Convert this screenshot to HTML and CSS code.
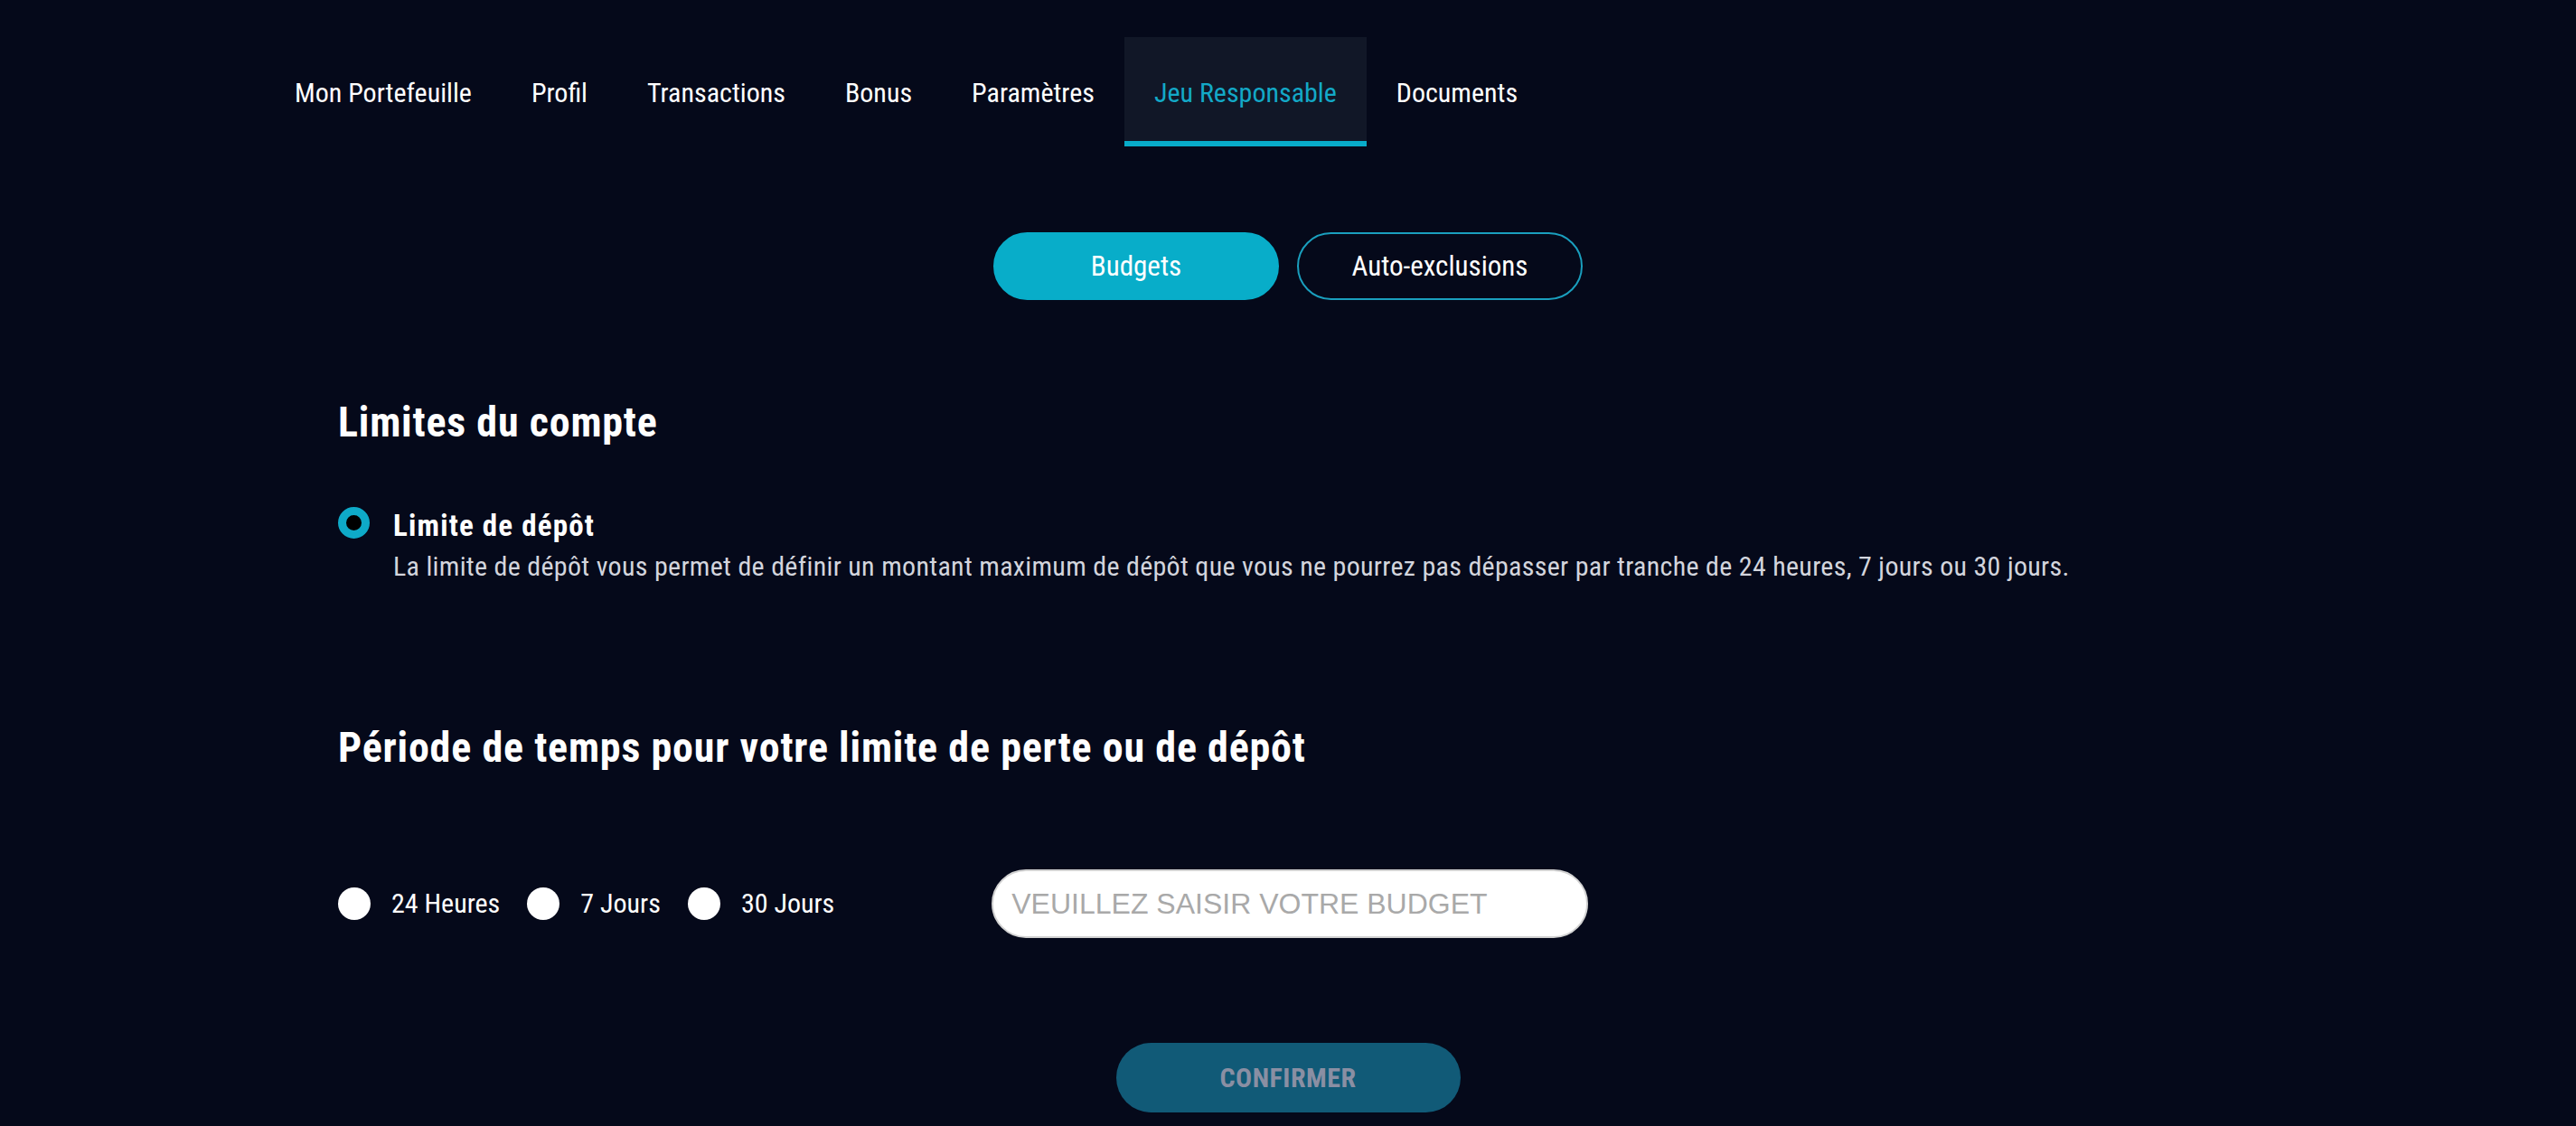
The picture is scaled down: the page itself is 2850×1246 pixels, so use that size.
FILE: index.html
```html
<!DOCTYPE html>
<html lang="fr">
<head>
<meta charset="utf-8">
<title>Jeu Responsable</title>
<link rel="stylesheet" href="styles.css">
</head>
<body>
<div class="page">
  <nav class="tabs">
    <a class="tab">Mon Portefeuille</a>
    <a class="tab">Profil</a>
    <a class="tab">Transactions</a>
    <a class="tab">Bonus</a>
    <a class="tab">Paramètres</a>
    <a class="tab tab-active">Jeu Responsable</a>
    <a class="tab">Documents</a>
  </nav>

  <div class="pills">
    <button class="pill pill-active">Budgets</button>
    <button class="pill">Auto-exclusions</button>
  </div>

  <section class="content">
    <h2 class="heading">Limites du compte</h2>
    <div class="option">
      <span class="ring"></span>
      <div class="option-text">
        <div class="option-title">Limite de dépôt</div>
        <div class="option-desc">La limite de dépôt vous permet de définir un montant maximum de dépôt que vous ne pourrez pas dépasser par tranche de 24 heures, 7 jours ou 30 jours.</div>
      </div>
    </div>

    <h2 class="heading heading-2">Période de temps pour votre limite de perte ou de dépôt</h2>

    <div class="period-row">
      <div class="periods">
        <label class="period"><span class="dot"></span><span class="period-label">24 Heures</span></label>
        <label class="period"><span class="dot"></span><span class="period-label">7 Jours</span></label>
        <label class="period"><span class="dot"></span><span class="period-label">30 Jours</span></label>
      </div>
      <input class="budget" type="text" placeholder="VEUILLEZ SAISIR VOTRE BUDGET">
    </div>

    <div class="actions">
      <button class="confirm">CONFIRMER</button>
    </div>
  </section>
</div>
</body>
</html>
```
FILE: styles.css
```css
html, body {
  margin: 0;
  padding: 0;
  background: #05091a;
  height: 100%;
  overflow: hidden;
}

body {
  font-family: "Roboto Condensed", "Liberation Sans Narrow", "Liberation Sans", sans-serif;
  color: #ffffff;
}

.page {
  width: 2262px;
  margin: 0 auto;
}

/* top tabs */
.tabs {
  display: flex;
  margin-top: 41px;
  height: 121px;
}

.tab {
  display: block;
  padding: 0 33px;
  font-size: 30px;
  line-height: 123px;
  height: 121px;
  color: #ffffff;
  white-space: nowrap;
}

.tab:first-child {
  margin-left: -1px;
}

.tab-active {
  background: #111727;
  color: #13a9c7;
  box-shadow: inset 0 -6px 0 #08abc9;
}

/* pill switch */
.pills {
  display: flex;
  justify-content: center;
  gap: 20px;
  margin-top: 95px;
}

.pill {
  width: 316px;
  height: 75px;
  border-radius: 38px;
  border: 2px solid #1a9fbe;
  background: transparent;
  color: #ffffff;
  font-family: inherit;
  font-size: 31px;
  padding: 0;
}

.pill-active {
  background: #08adc9;
  border-color: #08adc9;
}

/* content */
.content {
  padding: 0 80px;
}

.heading {
  margin: 108px 0 0;
  font-size: 46px;
  line-height: 55px;
  font-weight: 700;
  letter-spacing: 0.8px;
}

.heading-2 {
  margin-top: 151px;
}

.option {
  display: flex;
  align-items: flex-start;
  gap: 26px;
  margin-top: 64px;
}

.ring {
  flex: none;
  box-sizing: border-box;
  width: 35px;
  height: 35px;
  margin-top: 2px;
  border-radius: 50%;
  border: 9px solid #0eaac8;
  background: #000000;
}

.option-title {
  font-size: 33px;
  font-weight: 700;
  line-height: 45px;
  letter-spacing: 1.2px;
}

.option-desc {
  font-size: 30px;
  line-height: 45px;
  letter-spacing: 0.3px;
  color: #d3d5dd;
}

.period-row {
  display: flex;
  align-items: center;
  margin-top: 107px;
}

.periods {
  display: flex;
  align-items: center;
  gap: 30px;
}

.period {
  display: flex;
  align-items: center;
  gap: 23px;
}

.dot {
  width: 36px;
  height: 36px;
  border-radius: 50%;
  background: #ffffff;
}

.period-label {
  font-size: 30px;
  line-height: 40px;
}

.budget {
  box-sizing: border-box;
  width: 660px;
  height: 76px;
  margin-left: 174px;
  padding: 0 20px;
  border: 2px solid #d2d2d2;
  border-radius: 38px;
  background: #ffffff;
  font-family: "Liberation Sans", Arial, sans-serif;
  font-size: 32px;
  color: #333333;
  outline: none;
}

.budget::placeholder {
  color: #a9a9a9;
}

.actions {
  display: flex;
  justify-content: center;
  margin-top: 116px;
}

.confirm {
  width: 381px;
  height: 77px;
  border: none;
  border-radius: 39px;
  background: #115a77;
  color: #8a8fa3;
  font-family: inherit;
  font-size: 30px;
  font-weight: 700;
  letter-spacing: 0.5px;
  padding: 0;
}
```
